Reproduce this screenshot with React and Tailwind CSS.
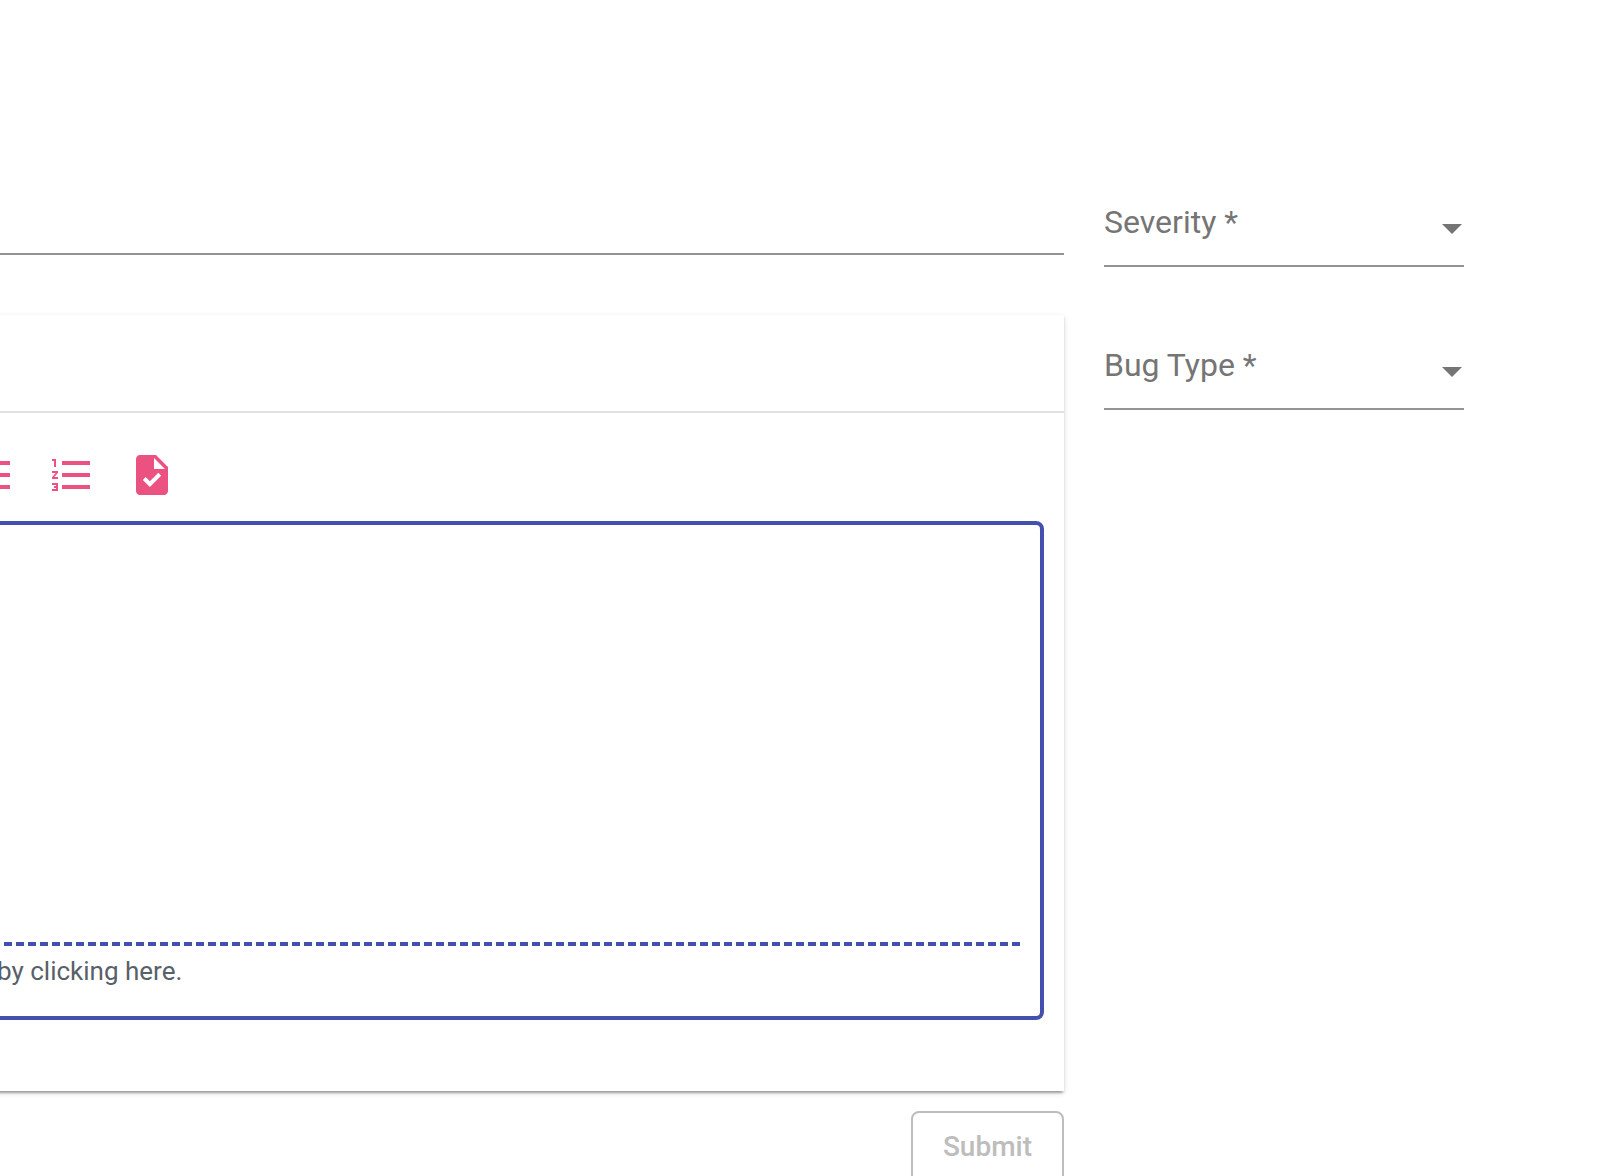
import React from "react";

function Icon({ d }) {
  return (
    <svg viewBox="0 0 24 24" className="size-12 fill-current" aria-hidden="true">
      <path d={d} />
    </svg>
  );
}

const tools = [
  {
    name: "Bulleted list",
    d: "M4 10.5a1.5 1.5 0 1 0 0 3 1.5 1.5 0 0 0 0-3zm0-6a1.5 1.5 0 1 0 0 3 1.5 1.5 0 0 0 0-3zm0 12a1.5 1.5 0 1 0 0 3 1.5 1.5 0 0 0 0-3zM7 19h14v-2H7v2zm0-6h14v-2H7v2zm0-8v2h14V5H7z",
  },
  {
    name: "Numbered list",
    d: "M2 17h2v.5H3v1h1v.5H2v1h3v-4H2v1zm1-9h1V4H2v1h1v3zm-1 3h1.8L2 13.1v.9h3v-1H3.2L5 10.9V10H2v1zm5-6v2h14V5H7zm0 14h14v-2H7v2zm0-6h14v-2H7v2z",
  },
  {
    name: "Task list",
    d: "M14 2H6c-1.1 0-1.99.9-1.99 2L4 20c0 1.1.89 2 1.99 2H18c1.1 0 2-.9 2-2V8l-6-6zm-3.06 16L7.4 14.46l1.41-1.41 2.12 2.12 4.24-4.24 1.41 1.41L10.94 18zM13 9V3.5L18.5 9H13z",
  },
];

function SelectField({ label }) {
  return (
    <div className="relative border-b-2 border-[#949494]">
      <select
        aria-label={label}
        required
        defaultValue=""
        className="block h-[85px] w-full appearance-none bg-transparent pb-0.5 text-[32px] leading-10 text-[#757575] outline-none"
      >
        <option value="">{label} *</option>
      </select>
      <svg
        viewBox="0 0 20 10"
        className="pointer-events-none absolute right-0.5 bottom-[31px] h-2.5 w-5 fill-[#757575]"
        aria-hidden="true"
      >
        <path d="M0 0h20L10 10z" />
      </svg>
    </div>
  );
}

export default function App() {
  return (
    <div className="flex h-screen gap-10 overflow-hidden bg-white pr-40 font-['Roboto',sans-serif]">
      <main className="flex min-w-0 flex-1 flex-col pt-[180px]">
        <input
          aria-label="Title"
          className="h-[75px] w-full shrink-0 border-b-2 border-[#949494] bg-transparent text-[32px] outline-none"
        />
        <section className="mt-15 -ml-8 shrink-0 bg-white pb-[71px] shadow-[0_4px_2px_-2px_rgba(0,0,0,0.2),0_2px_2px_0_rgba(0,0,0,0.14),0_2px_6px_0_rgba(0,0,0,0.12)]">
          <div className="h-[98px] border-b-2 border-[#e0e0e0]" />
          <div className="flex gap-8 pt-[38px] pb-[22px] text-[#eb5281]">
            {tools.map((tool) => (
              <button key={tool.name} type="button" aria-label={tool.name}>
                <Icon d={tool.d} />
              </button>
            ))}
          </div>
          <div className="mx-5 rounded-lg border-4 border-[#4350af] pr-5">
            <textarea
              aria-label="Description"
              className="block h-[421px] w-full resize-none border-b-4 border-dashed border-[#4350af] bg-transparent p-4 text-[28px] outline-none"
            />
            <button
              type="button"
              className="block h-[70px] w-full pb-5 pl-[5px] text-left text-[26px] leading-8 text-[#586069]"
            >
              by clicking here.
            </button>
          </div>
        </section>
        <button
          type="button"
          disabled
          className="mt-5 h-[72px] shrink-0 self-end rounded-lg border-2 border-[#bdbdbd] px-[30px] text-[28px] leading-9 font-medium text-[#bdbdbd]"
        >
          Submit
        </button>
      </main>
      <aside className="flex w-90 shrink-0 flex-col gap-14 pt-[180px]">
        <SelectField label="Severity" />
        <SelectField label="Bug Type" />
      </aside>
    </div>
  );
}
